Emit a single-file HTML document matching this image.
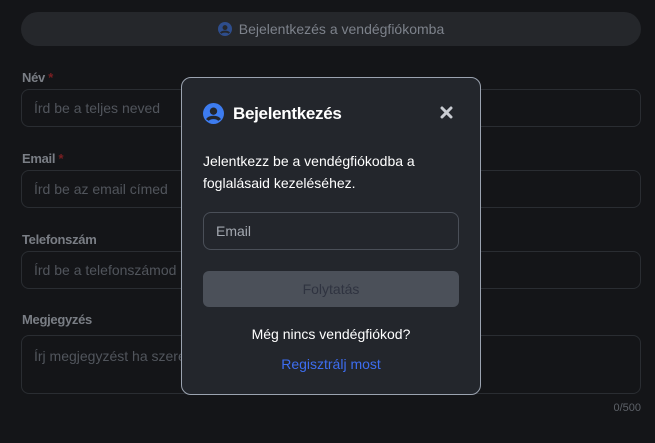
<!DOCTYPE html>
<html><head><meta charset="utf-8"><style>
*{box-sizing:border-box;margin:0;padding:0}
body{width:655px;height:443px;background:#141518;font-family:"Liberation Sans",sans-serif;position:relative;overflow:hidden}
.a{position:absolute}
.top{left:21px;top:12px;width:620px;height:34px;border-radius:17px;background:#25272b;color:#7d828b;font-size:14px;display:flex;align-items:center;justify-content:center;gap:7px}
.lab{left:22px;font-size:13px;font-weight:bold;color:#7a7e85;letter-spacing:-0.3px}
.lab span{color:#7a1f22}
.inp{left:21px;width:620px;height:38px;border:1px solid #2a2d32;border-radius:8px;color:#51555c;font-size:14px;padding:10px 12px}
.modal{left:181px;top:77px;width:300px;height:318px;background:#23262c;border:1px solid #9ba3b0;border-radius:10px}
</style></head><body>
<div class="a top"><svg width="14" height="14" viewBox="0 0 20 20"><circle cx="10" cy="10" r="10" fill="#2e4d8c"/><circle cx="10" cy="8" r="3.5" fill="#25272b"/><path d="M4 16c2-3 10-3 12 0" stroke="#25272b" stroke-width="3" fill="none"/></svg>Bejelentkezés a vendégfiókomba</div>
<div class="a lab" style="top:70px">Név<span> *</span></div>
<div class="a inp" style="top:89px">Írd be a teljes neved</div>
<div class="a lab" style="top:151px">Email<span> *</span></div>
<div class="a inp" style="top:170px">Írd be az email címed</div>
<div class="a lab" style="top:232px">Telefonszám</div>
<div class="a inp" style="top:251px">Írd be a telefonszámod</div>
<div class="a lab" style="top:312px">Megjegyzés</div>
<div class="a inp" style="top:335px;height:59px;padding-top:12px">Írj megjegyzést ha szeretnél</div>
<div class="a" style="right:14px;top:402px;font-size:11px;color:#5d6168">0/500</div>
<div class="a modal">
<svg class="a" style="left:21px;top:25px" width="21" height="21" viewBox="0 0 20 20"><circle cx="10" cy="10" r="10" fill="#3d7cf0"/><circle cx="10" cy="7.8" r="3.5" fill="#23262c"/><path d="M4.2 16.2c2-3.3 9.6-3.3 11.6 0" stroke="#23262c" stroke-width="3.2" fill="none"/></svg>
<div class="a" style="left:51px;top:26px;font-size:17px;font-weight:bold;color:#fff;letter-spacing:-0.3px">Bejelentkezés</div>
<svg class="a" style="left:258px;top:28px" width="13" height="13" viewBox="0 0 13 13"><path d="M2 2L11 11M11 2L2 11" stroke="#c9ccd2" stroke-width="3" stroke-linecap="round"/></svg>
<div class="a" style="left:21px;top:72px;width:260px;font-size:14px;line-height:22px;color:#fff">Jelentkezz be a vendégfiókodba a foglalásaid kezeléséhez.</div>
<div class="a" style="left:21px;top:134px;width:256px;height:38px;border:1px solid #4a4f58;border-radius:8px;font-size:14px;color:#a3a8b0;padding:10px 12px">Email</div>
<div class="a" style="left:21px;top:193px;width:256px;height:36px;background:#4b5059;border-radius:6px;font-size:14px;color:#2f3340;text-align:center;line-height:36px">Folytatás</div>
<div class="a" style="left:0;width:298px;top:248px;text-align:center;font-size:14px;color:#fff">Még nincs vendégfiókod?</div>
<div class="a" style="left:0;width:298px;top:278px;text-align:center;font-size:14px;color:#3d6df0">Regisztrálj most</div>
</div>
</body></html>
